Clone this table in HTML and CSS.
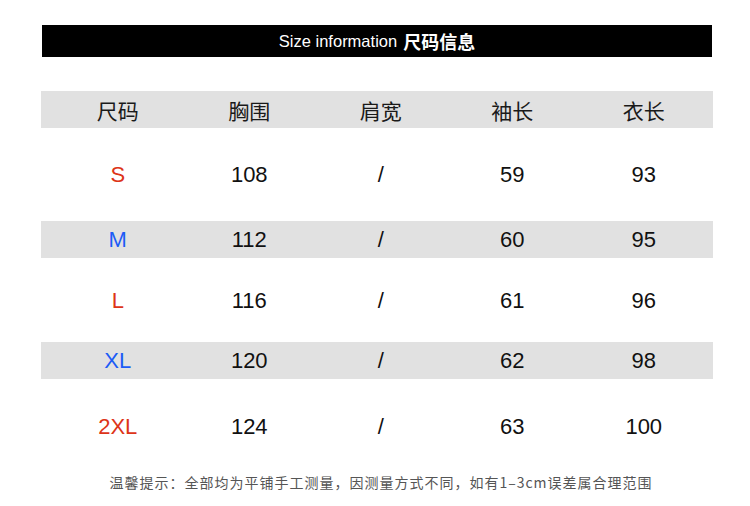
FILE: index.html
```html
<!DOCTYPE html>
<html lang="zh">
<head>
<meta charset="utf-8">
<link rel="stylesheet" href="styles.css">
</head>
<body>
<div class="page">
  <div class="title-bar"><span class="en">Size information</span> <span class="cn">尺码信息</span></div>
  <div class="table">
    <div class="row head shaded"><div>尺码</div><div>胸围</div><div>肩宽</div><div>袖长</div><div>衣长</div></div>
    <div class="row tall1"><div class="red">S</div><div>108</div><div>/</div><div>59</div><div>93</div></div>
    <div class="row shaded"><div class="blue">M</div><div>112</div><div>/</div><div>60</div><div>95</div></div>
    <div class="row tall2"><div class="red">L</div><div>116</div><div>/</div><div>61</div><div>96</div></div>
    <div class="row shaded"><div class="blue">XL</div><div>120</div><div>/</div><div>62</div><div>98</div></div>
    <div class="row tall3"><div class="red">2XL</div><div>124</div><div>/</div><div>63</div><div>100</div></div>
  </div>
  <div class="note">温馨提示：全部均为平铺手工测量，因测量方式不同，如有1–3cm误差属合理范围</div>
</div>
</body>
</html>
```
FILE: styles.css
```css
html, body {
  margin: 0;
  padding: 0;
  background: #ffffff;
}
.page {
  width: 750px;
  height: 506px;
  padding-left: 41px;
  box-sizing: border-box;
  font-family: "Liberation Sans", "Noto Sans CJK SC", sans-serif;
}
.title-bar {
  margin: 25px 0 0 1px;
  width: 670px;
  height: 32px;
  background: #000;
  color: #fff;
  display: flex;
  align-items: center;
  justify-content: center;
  gap: 6px;
}
.title-bar .en {
  font-size: 16.5px;
  padding-top: 1px;
}
.title-bar .cn {
  font-family: "Noto Sans CJK SC", sans-serif;
  font-weight: 700;
  font-size: 18px;
}
.table {
  margin-top: 34px;
  width: 672px;
}
.row {
  display: grid;
  grid-template-columns: repeat(5, 131.5px);
  padding-left: 11px;
  padding-top: 1px;
  box-sizing: border-box;
  align-items: center;
  height: 37px;
  font-size: 22px;
  color: #111;
}
.row > div {
  text-align: center;
}
.shaded {
  background: #e1e1e1;
}
.head {
  font-family: "Noto Sans CJK SC", sans-serif;
  font-size: 21px;
  font-weight: 400;
  color: #1a1a1a;
  padding-top: 0;
}
.tall1 { height: 93px; }
.tall2 { height: 84px; }
.tall3 { height: 94px; }
.red { color: #dd3418; }
.blue { color: #1c5cf6; }
.note {
  width: 672px;
  text-align: center;
  padding-left: 8px;
  box-sizing: border-box;
  font-family: "Noto Sans CJK SC", sans-serif;
  font-size: 14px;
  letter-spacing: 1px;
  line-height: 18px;
  color: #555;
}
```
